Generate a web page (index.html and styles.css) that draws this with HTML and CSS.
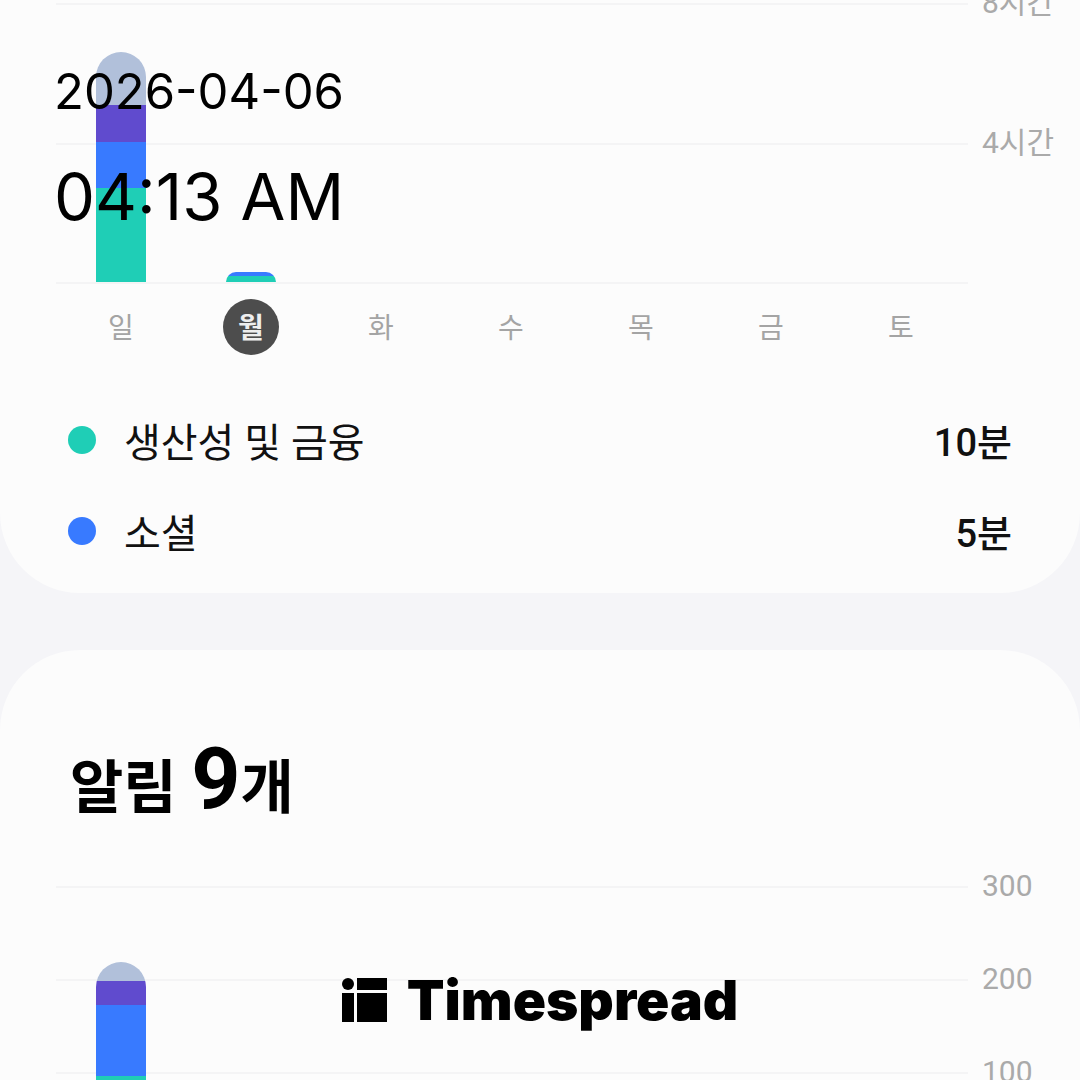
FILE: index.html
```html
<!DOCTYPE html>
<html lang="ko">

<head>
    <meta charset="UTF-8">
    <meta name="viewport" content="width=device-width, initial-scale=1.0">
    <title>Timespread</title>
    <link rel="stylesheet" href="styles.css">
</head>

<body>
    <main>
        <section class="card card-usage">
            <div class="chart">
                <div class="ticks">
                    <div class="tick"><span>8시간</span></div>
                    <div class="tick"><span>4시간</span></div>
                    <div class="tick"></div>
                </div>
                <div class="bars">
                    <div class="bar">
                        <div class="other" style="height: 53px"></div>
                        <div class="purple" style="height: 37px"></div>
                        <div class="blue" style="height: 46px"></div>
                        <div class="green" style="height: 94px"></div>
                    </div>
                    <div class="bar bar-small">
                        <div class="blue" style="height: 4px"></div>
                        <div class="green" style="height: 6px"></div>
                    </div>
                </div>
            </div>
            <div class="days">
                <span>일</span>
                <span class="today">월</span>
                <span>화</span>
                <span>수</span>
                <span>목</span>
                <span>금</span>
                <span>토</span>
            </div>
            <ul class="legend">
                <li><i class="dot green"></i><span>생산성 및 금융</span><strong>10분</strong></li>
                <li><i class="dot blue"></i><span>소셜</span><strong>5분</strong></li>
            </ul>
        </section>

        <section class="card card-alerts">
            <h2>알림 <span>9</span>개</h2>
            <div class="chart">
                <div class="ticks">
                    <div class="tick"><span>300</span></div>
                    <div class="tick"><span>200</span></div>
                    <div class="tick"><span>100</span></div>
                    <div class="tick"></div>
                </div>
                <div class="bars">
                    <div class="bar">
                        <div class="other" style="height: 19px"></div>
                        <div class="purple" style="height: 24px"></div>
                        <div class="blue" style="height: 71px"></div>
                        <div class="green" style="height: 89px"></div>
                    </div>
                </div>
            </div>
        </section>
    </main>

    <div class="stamp">
        <div class="date">2026-04-06</div>
        <div class="time">04:13 AM</div>
    </div>

    <div class="brand">
        <svg width="45" height="44" viewBox="0 0 45 44" aria-hidden="true">
            <circle cx="6" cy="6" r="6" />
            <rect x="15" y="0" width="30" height="12" />
            <rect x="0" y="15" width="12" height="29" />
            <rect x="15" y="15" width="30" height="29" />
        </svg>
        <span>Timespread</span>
    </div>
</body>

</html>
```
FILE: styles.css
```css
* {
    box-sizing: border-box;
}

body {
    position: relative;
    height: 100vh;
    margin: 0;
    overflow: hidden;
    background-color: #f5f5f8;
    color: #111;
    font-family: Roboto, "Noto Sans CJK KR", sans-serif;
}

.card {
    background-color: #fcfcfc;
}

.card-usage {
    padding: 3px 0 17px;
    margin-bottom: 57px;
    border-radius: 0 0 80px 80px;
}

.card-alerts {
    padding: 80px 0;
    border-radius: 80px 80px 0 0;
}

h2 {
    margin: 0 0 49px;
    padding: 0 70px;
    font-size: 58px;
    line-height: 98px;
    font-weight: 700;
    color: #000;
}

h2 span {
    font-size: 86px;
}

/* grid lines and bars share one cell */
.chart {
    display: grid;
    height: 281px;
    padding-left: 56px;
}

.ticks,
.bars {
    grid-area: 1 / 1;
}

.ticks {
    display: flex;
    flex-direction: column;
    justify-content: space-between;
}

.tick {
    display: flex;
    align-items: center;
    gap: 14px;
    height: 2px;
    color: #aaa;
    font-size: 30px;
    line-height: 36px;
}

.tick::before {
    content: "";
    flex: 1;
    height: 2px;
    background-color: #f4f4f5;
}

.tick span {
    width: 98px;
    padding-bottom: 2px;
    white-space: nowrap;
}

.tick:last-child {
    padding-right: 112px;
}

.bars,
.days {
    display: grid;
    grid-template-columns: repeat(7, 1fr);
    justify-items: center;
    padding-right: 114px;
}

.bars {
    align-items: end;
    padding-bottom: 2px;
}

.bar {
    width: 50px;
    border-radius: 25px 25px 0 0;
    overflow: hidden;
}

.bar-small {
    border-radius: 10px 10px 0 0;
}

.other {
    background-color: #b1c0da;
}

.purple {
    background-color: #604bce;
}

.blue {
    background-color: #387aff;
}

.green {
    background-color: #1fceb6;
}

.days {
    margin-top: 15px;
    padding-left: 56px;
    color: #a4a4a4;
    font-size: 28px;
    line-height: 60px;
    text-align: center;
}

.days span {
    width: 56px;
    height: 56px;
}

.days .today {
    border-radius: 50%;
    background-color: #4d4d4d;
    color: #eee;
    font-weight: 700;
}

.legend {
    margin: 39px 0 0;
    padding: 0 68px;
    list-style: none;
}

.legend li {
    display: flex;
    align-items: center;
    height: 91px;
    font-size: 40px;
}

.dot {
    width: 28px;
    height: 28px;
    margin-right: 28px;
    border-radius: 50%;
}

.legend strong {
    margin-left: auto;
    font-size: 38px;
    font-weight: 500;
}

.stamp {
    position: absolute;
    top: 61px;
    left: 54px;
    color: #000;
    font-family: Inter, sans-serif;
}

.date {
    font-size: 49px;
    line-height: 62px;
}

.time {
    margin-top: 32px;
    font-size: 65px;
    line-height: 84px;
}

.brand {
    position: absolute;
    right: 0;
    bottom: 50px;
    left: 0;
    display: flex;
    align-items: center;
    justify-content: center;
    gap: 20px;
    color: #000;
    font-family: Inter, sans-serif;
    font-size: 55px;
    font-weight: 900;
    line-height: 60px;
}
```
